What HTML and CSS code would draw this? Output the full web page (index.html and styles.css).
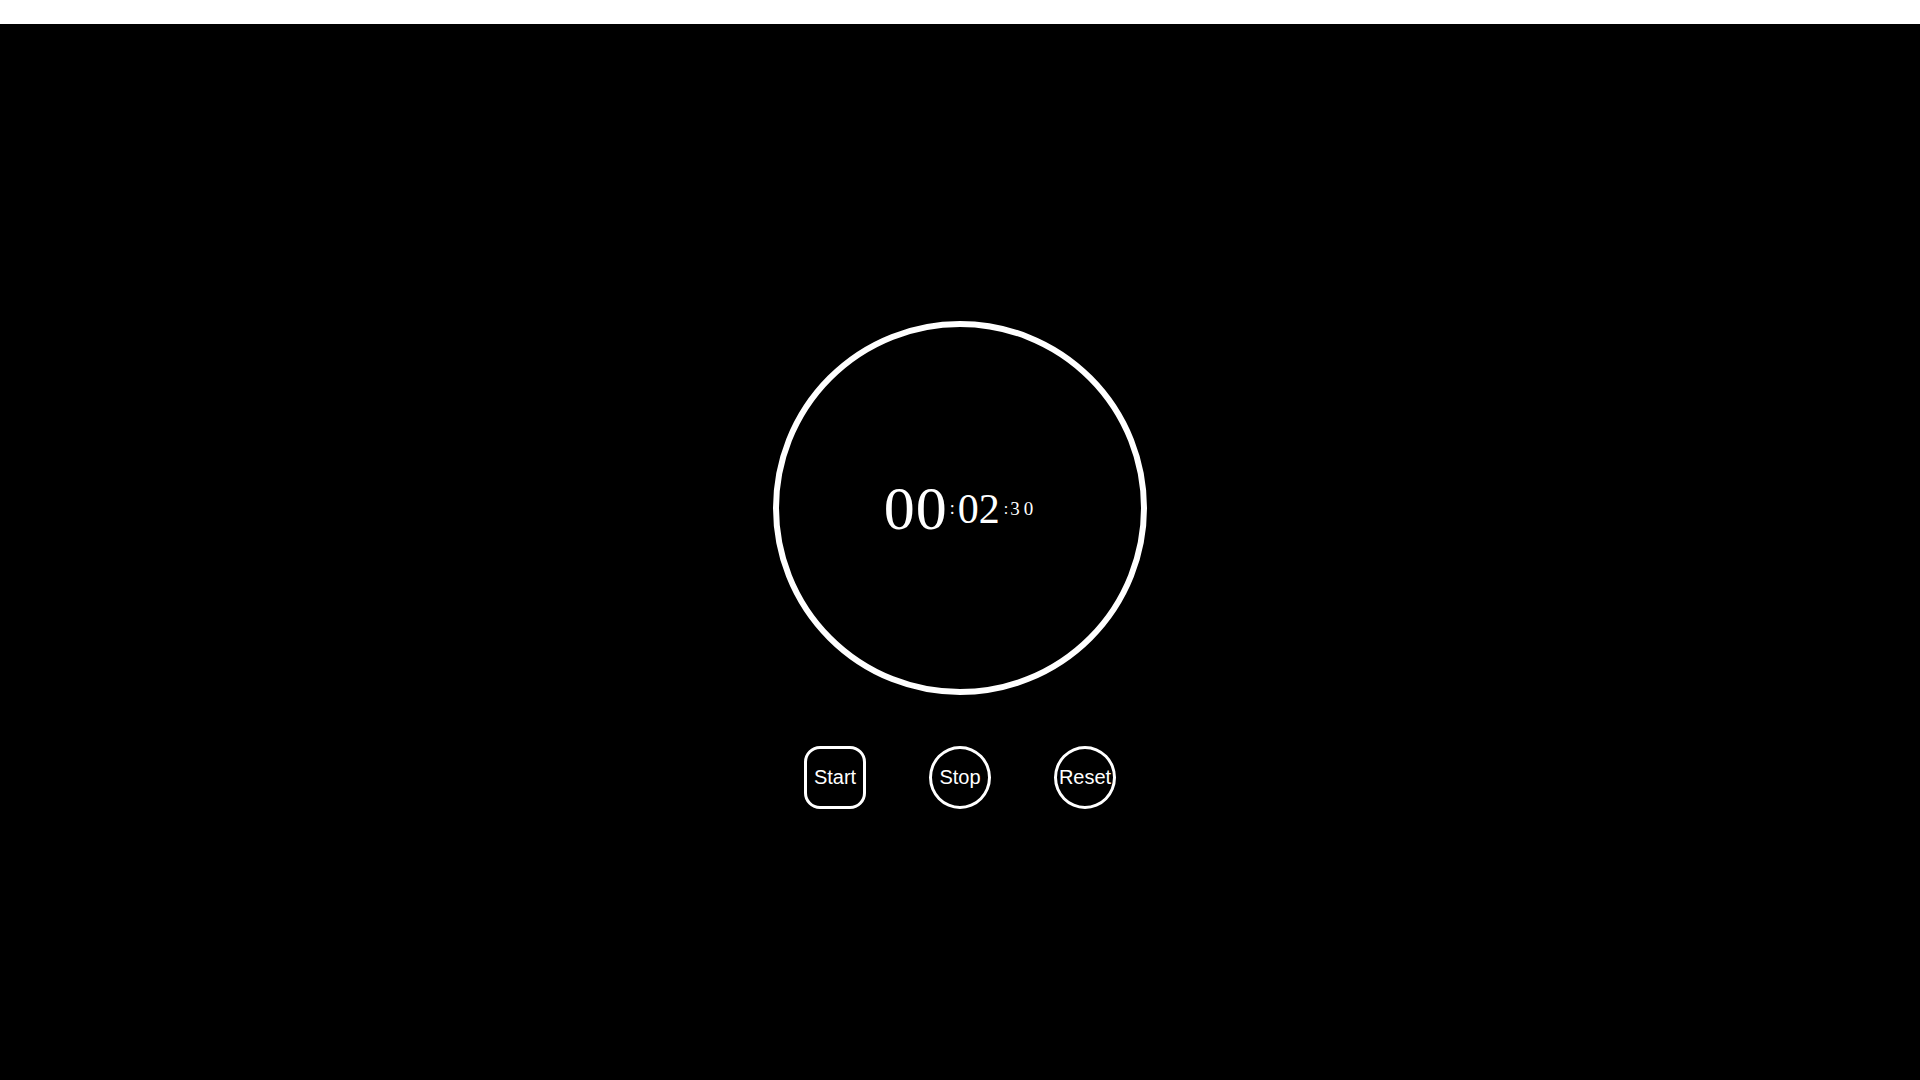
FILE: index.html
```html
<!DOCTYPE html>
<html lang="en">
<head>
<meta charset="utf-8">
<title>Timer</title>
<link rel="stylesheet" href="styles.css">
</head>
<body>
<main class="app">
  <div class="dial">
    <div class="time">
      <span class="hh">00</span><span class="sep1">:</span><span class="mm">02</span><span class="sep2">:</span><span class="ss">30</span>
    </div>
  </div>
  <div class="controls">
    <button class="btn btn-start">Start</button>
    <button class="btn btn-round">Stop</button>
    <button class="btn btn-round">Reset</button>
  </div>
</main>
</body>
</html>
```
FILE: styles.css
```css
html, body {
  margin: 0;
  padding: 0;
  background: #fff;
}

.app {
  margin-top: 24px;
  height: 1056px;
  background: #000;
  display: flex;
  flex-direction: column;
  align-items: center;
  padding-top: 297px;
  box-sizing: border-box;
}

.dial {
  width: 374px;
  height: 374px;
  box-sizing: border-box;
  border: 6px solid #fff;
  border-radius: 50%;
  display: flex;
  align-items: center;
  justify-content: center;
}

.time {
  display: flex;
  align-items: center;
  color: #fff;
  font-family: "Liberation Serif", "Times New Roman", serif;
  line-height: normal;
  margin-top: 1px;
  margin-right: -1px;
}

.hh {
  font-size: 62px;
  letter-spacing: 1px;
}

.sep1 {
  font-size: 18px;
  margin-left: 2px;
  margin-right: 3px;
}

.mm {
  font-size: 42px;
}

.sep2 {
  font-size: 16px;
  margin-left: 4px;
  margin-right: 2px;
}

.ss {
  font-size: 19px;
  letter-spacing: 4px;
  margin-top: 1px;
}

.controls {
  display: flex;
  gap: 63px;
  margin-top: 51px;
}

.btn {
  width: 62px;
  height: 63px;
  box-sizing: border-box;
  border: 3px solid #fff;
  background: #000;
  color: #fff;
  font-family: "Liberation Sans", Arial, sans-serif;
  font-size: 20px;
  padding: 0;
  display: flex;
  align-items: center;
  justify-content: center;
}

.btn-start {
  border-radius: 16px;
}

.btn-round {
  border-radius: 50%;
}
```
